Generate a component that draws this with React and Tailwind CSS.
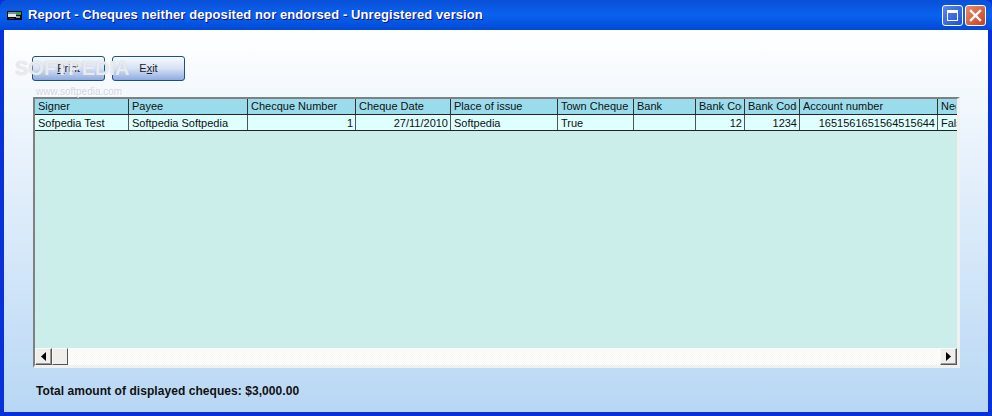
import React from 'react';

const columns = [
  { title: 'Signer', width: 'w-[94px]', value: 'Sofpedia Test' },
  { title: 'Payee', width: 'w-[119px]', value: 'Softpedia Softpedia' },
  { title: 'Checque Number', width: 'w-[108px]', value: '1', right: true },
  { title: 'Cheque Date', width: 'w-[95px]', value: '27/11/2010', right: true },
  { title: 'Place of issue', width: 'w-[107px]', value: 'Softpedia' },
  { title: 'Town Cheque', width: 'w-[76px]', value: 'True' },
  { title: 'Bank', width: 'w-[62px]', value: '' },
  { title: 'Bank Code', width: 'w-[49px]', value: '12', right: true },
  { title: 'Bank Code', width: 'w-[55px]', value: '1234', right: true },
  { title: 'Account number', width: 'w-[138px]', value: '1651561651564515644', right: true },
  { title: 'Negotiable', width: 'w-[20px]', value: 'False', last: true },
];

const ScrollButton = ({ dir }) => (
  <div className="w-[17px] h-[17px] shrink-0 flex items-center justify-center bg-[#efeeea] border border-[#f8f8f6] border-r-[#555555] border-b-[#555555] shadow-[inset_-1px_-1px_0_#9a9a9a]">
    <svg width="5" height="9" viewBox="0 0 5 9" fill="#000000">
      {dir === 'left' ? <path d="M5 0V9L0 4.5Z" /> : <path d="M0 0V9L5 4.5Z" />}
    </svg>
  </div>
);

const ActionButton = ({ before, mnemonic, after }) => (
  <button className="w-[73px] h-[25px] rounded-[3px] border border-[#1c5180] bg-gradient-to-b from-[#f8fafe] via-[#d6e2f5] to-[#8fabe0] text-[11px] text-[#222222] flex items-center justify-center">
    <span>
      {before}
      <span className="underline">{mnemonic}</span>
      {after}
    </span>
  </button>
);

const App = () => {
  return (
    <div className="w-[992px] h-[416px] overflow-hidden flex flex-col bg-[#0831d9] font-['Liberation_Sans',Arial,sans-serif] text-[12px]">
      {/* title bar */}
      <div className="h-[30px] shrink-0 flex items-center pl-[7px] pr-[6px] rounded-t-[7px] bg-gradient-to-b from-[#0a50d8] via-[#0a62ee] to-[#0249d6]">
        <svg width="15" height="9" viewBox="0 0 15 9" className="shrink-0">
          <rect width="15" height="9" fill="#0a0a0a" />
          <rect x="1" y="1" width="8" height="2" fill="#6f9a94" />
          <rect x="9" y="1" width="5" height="3" fill="#2f9e5a" />
          <rect x="1" y="3" width="8" height="3" fill="#e8e8e8" />
          <rect x="9" y="5" width="4" height="2" fill="#9a9a9a" />
          <rect x="2" y="7" width="5" height="1" fill="#3a3a6a" />
        </svg>
        <span className="ml-[6px] text-[13px] tracking-[0.09px] font-bold text-white [text-shadow:1px_1px_0_#0f1089] whitespace-nowrap">
          Report - Cheques neither deposited nor endorsed - Unregistered version
        </span>
        <div className="ml-auto flex items-center gap-[2px]">
          <div className="w-[21px] h-[21px] rounded-[3px] border border-white bg-gradient-to-br from-[#5c86ee] to-[#1f4fd0] flex items-center justify-center">
            <div className="w-[11px] h-[11px] border border-white border-t-[3px]" />
          </div>
          <div className="w-[21px] h-[21px] rounded-[3px] border border-white bg-gradient-to-br from-[#e98a6a] to-[#c5401c] flex items-center justify-center">
            <svg width="13" height="13" viewBox="0 0 13 13" stroke="#ffffff" strokeWidth="2.4" strokeLinecap="square">
              <path d="M2 2L11 11M11 2L2 11" />
            </svg>
          </div>
        </div>
      </div>

      {/* client area */}
      <div className="flex-1 min-h-0 mx-[4px] mb-[4px] relative flex flex-col bg-gradient-to-b from-[#ffffff] to-[#b8d7f4] pl-[28px] pt-[26px]">
        <div className="flex gap-[7px] h-[25px]">
          <ActionButton before="" mnemonic="P" after="rint" />
          <ActionButton before="E" mnemonic="x" after="it" />
        </div>

        {/* grid */}
        <div className="mt-[16px] ml-[1px] w-[927px] h-[271px] flex flex-col border-2 border-r-[3px] border-b-[3px] border-[#808080] border-r-[#f0f0f0] border-b-[#f0f0f0] bg-[#cbeeea] overflow-hidden">
          <div className="flex h-[16px] shrink-0 bg-[#9bdcec] border-b border-[#222222]">
            {columns.map((col, i) => (
              <div key={i} className={`${col.width} shrink-0 pl-[3px] pr-[2px] leading-[15px] text-[11px] text-[#111111] ${col.last ? '' : 'border-r border-[#333333]'}`}>
                <div className="overflow-hidden whitespace-nowrap">{col.title}</div>
              </div>
            ))}
          </div>
          <div className="flex h-[16px] shrink-0 bg-[#ddfffd] border-b border-[#222222]">
            {columns.map((col, i) => (
              <div key={i} className={`${col.width} shrink-0 overflow-hidden whitespace-nowrap pt-[1px] leading-[14px] text-[11px] text-[#111111] ${col.right ? 'text-right pr-[2px]' : 'pl-[3px]'} ${col.last ? '' : 'border-r border-[#555555]'}`}>
                {col.value}
              </div>
            ))}
          </div>
          <div className="flex-1" />
          <div className="flex h-[17px] shrink-0 bg-[repeating-conic-gradient(#f6f6f4_0_25%,#ffffff_0_50%)] bg-[length:2px_2px]">
            <ScrollButton dir="left" />
            <div className="w-[16px] h-[17px] shrink-0 bg-[#efeeea] border border-[#f8f8f6] border-r-[#555555] border-b-[#555555]" />
            <div className="flex-1" />
            <ScrollButton dir="right" />
          </div>
        </div>

        <p className="mt-[14px] ml-[4px] text-[12px] tracking-[0.06px] font-bold text-[#111111] whitespace-nowrap">
          Total amount of displayed cheques: $3,000.00
        </p>

        {/* watermark */}
        <div className="absolute left-[11px] top-[24px] text-[20px] leading-[28px] font-bold text-white/70 [text-shadow:0_0_1px_#b8bcc6] pointer-events-none">
          SOFTPEDIA
        </div>
        <div className="absolute left-[32px] top-[56px] text-[10px] leading-[12px] text-[#d2d6de] [text-shadow:1px_1px_0_#ffffff] pointer-events-none">
          www.softpedia.com
        </div>
      </div>
    </div>
  );
};

export default App;
